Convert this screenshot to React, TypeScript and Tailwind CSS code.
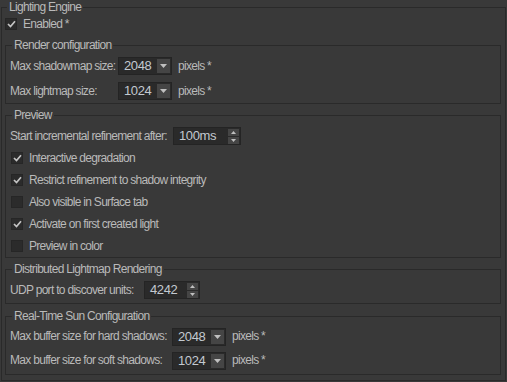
import React from "react";

const txt = "whitespace-nowrap text-[12px] leading-[15px] text-[#bababa] tracking-[-0.7px]";

function Check({ checked }: { checked: boolean }) {
  return (
    <div className="flex h-[12px] w-[12px] shrink-0 items-center justify-center border border-[#262626] bg-[#2b2b2b]">
      {checked && (
        <svg width="9" height="8" viewBox="0 0 9 8">
          <path d="M1 4 L3.5 6.5 L8 1.2" fill="none" stroke="#c4c4c4" strokeWidth="1.7" />
        </svg>
      )}
    </div>
  );
}

function Combo({ value }: { value: string }) {
  return (
    <div className="flex h-[18px] w-[54px] shrink-0 items-center border border-[#242424] bg-[#2a2a2a]">
      <span className="flex-1 pl-[5px] text-[13px] leading-[16px] text-[#c3c9d0] tracking-[-0.4px]">{value}</span>
      <div className="mr-[1px] flex h-[14px] w-[13px] items-center justify-center bg-[#454545]">
        <svg width="7" height="4" viewBox="0 0 7 4">
          <path d="M0 0 H7 L3.5 4 Z" fill="#c0c0c0" />
        </svg>
      </div>
    </div>
  );
}

function Spin({ value, width }: { value: string; width: string }) {
  return (
    <div className={`flex h-[18px] ${width} shrink-0 items-center border border-[#242424] bg-[#2a2a2a]`}>
      <span className="flex-1 pl-[5px] text-[13px] leading-[16px] text-[#c3c9d0] tracking-[-0.4px]">{value}</span>
      <div className="mr-[1px] flex w-[11px] flex-col gap-[1px]">
        <div className="flex h-[7px] items-center justify-center bg-[#454545]">
          <svg width="5" height="3" viewBox="0 0 5 3">
            <path d="M0 3 H5 L2.5 0 Z" fill="#c0c0c0" />
          </svg>
        </div>
        <div className="flex h-[7px] items-center justify-center bg-[#454545]">
          <svg width="5" height="3" viewBox="0 0 5 3">
            <path d="M0 0 H5 L2.5 3 Z" fill="#c0c0c0" />
          </svg>
        </div>
      </div>
    </div>
  );
}

function Group({ title, className, children }: { title: string; className?: string; children: React.ReactNode }) {
  return (
    <fieldset className={`border border-[#2a2a2a] pl-[4px] pr-[4px] ${className ?? ""}`}>
      <legend className={`ml-[2px] px-[2px] ${txt}`}>{title}</legend>
      {children}
    </fieldset>
  );
}

function CheckRow({ label, checked }: { label: string; checked: boolean }) {
  return (
    <div className="flex h-[20px] items-center pl-[1px]">
      <Check checked={checked} />
      <span className={`ml-[6px] ${txt}`}>{label}</span>
    </div>
  );
}

export default function App() {
  return (
    <div
      className="h-[382px] w-[507px] overflow-hidden bg-[#393939] pl-[1px]"
      style={{ fontFamily: '"Liberation Sans", Arial, sans-serif' }}
    >
      <fieldset className="h-[381px] w-[505px] border border-[#2a2a2a] pl-[3px] pr-[4px]">
        <legend className={`ml-[2px] px-[2px] ${txt}`}>Lighting Engine</legend>
        <div className="flex h-[18px] items-center">
          <Check checked />
          <span className={`ml-[6px] ${txt}`}>Enabled *</span>
        </div>

        <Group title="Render configuration" className="mt-[5px] pt-[4px] pb-[3px]">
          <div className="flex flex-col gap-[7px]">
            <div className="flex h-[18px] items-center">
              <span className={`w-[108px] shrink-0 ${txt}`}>Max shadowmap size:</span>
              <Combo value="2048" />
              <span className={`ml-[6px] ${txt}`}>pixels *</span>
            </div>
            <div className="flex h-[18px] items-center">
              <span className={`w-[108px] shrink-0 ${txt}`}>Max lightmap size:</span>
              <Combo value="1024" />
              <span className={`ml-[6px] ${txt}`}>pixels *</span>
            </div>
          </div>
        </Group>

        <Group title="Preview" className="mt-[4px] pt-[4px] pb-[1px]">
          <div className="flex h-[18px] items-center">
            <span className={`w-[163px] shrink-0 ${txt}`}>Start incremental refinement after:</span>
            <Spin value="100ms" width="w-[68px]" />
          </div>
          <div className="mt-[3px] flex flex-col gap-[2px]">
            <CheckRow label="Interactive degradation" checked />
            <CheckRow label="Restrict refinement to shadow integrity" checked />
            <CheckRow label="Also visible in Surface tab" checked={false} />
            <CheckRow label="Activate on first created light" checked />
            <CheckRow label="Preview in color" checked={false} />
          </div>
        </Group>

        <Group title="Distributed Lightmap Rendering" className="mt-[4px] pt-[4px] pb-[4px]">
          <div className="flex h-[18px] items-center">
            <span className={`w-[134px] shrink-0 ${txt}`}>UDP port to discover units:</span>
            <Spin value="4242" width="w-[56px]" />
          </div>
        </Group>

        <Group title="Real-Time Sun Configuration" className="mt-[5px] pt-[3px] pb-[4px]">
          <div className="flex flex-col gap-[5px]">
            <div className="flex h-[19px] items-center">
              <span className={`w-[162px] shrink-0 ${txt}`}>Max buffer size for hard shadows:</span>
              <Combo value="2048" />
              <span className={`ml-[6px] ${txt}`}>pixels *</span>
            </div>
            <div className="flex h-[19px] items-center">
              <span className={`w-[162px] shrink-0 ${txt}`}>Max buffer size for soft shadows:</span>
              <Combo value="1024" />
              <span className={`ml-[6px] ${txt}`}>pixels *</span>
            </div>
          </div>
        </Group>
      </fieldset>
    </div>
  );
}
